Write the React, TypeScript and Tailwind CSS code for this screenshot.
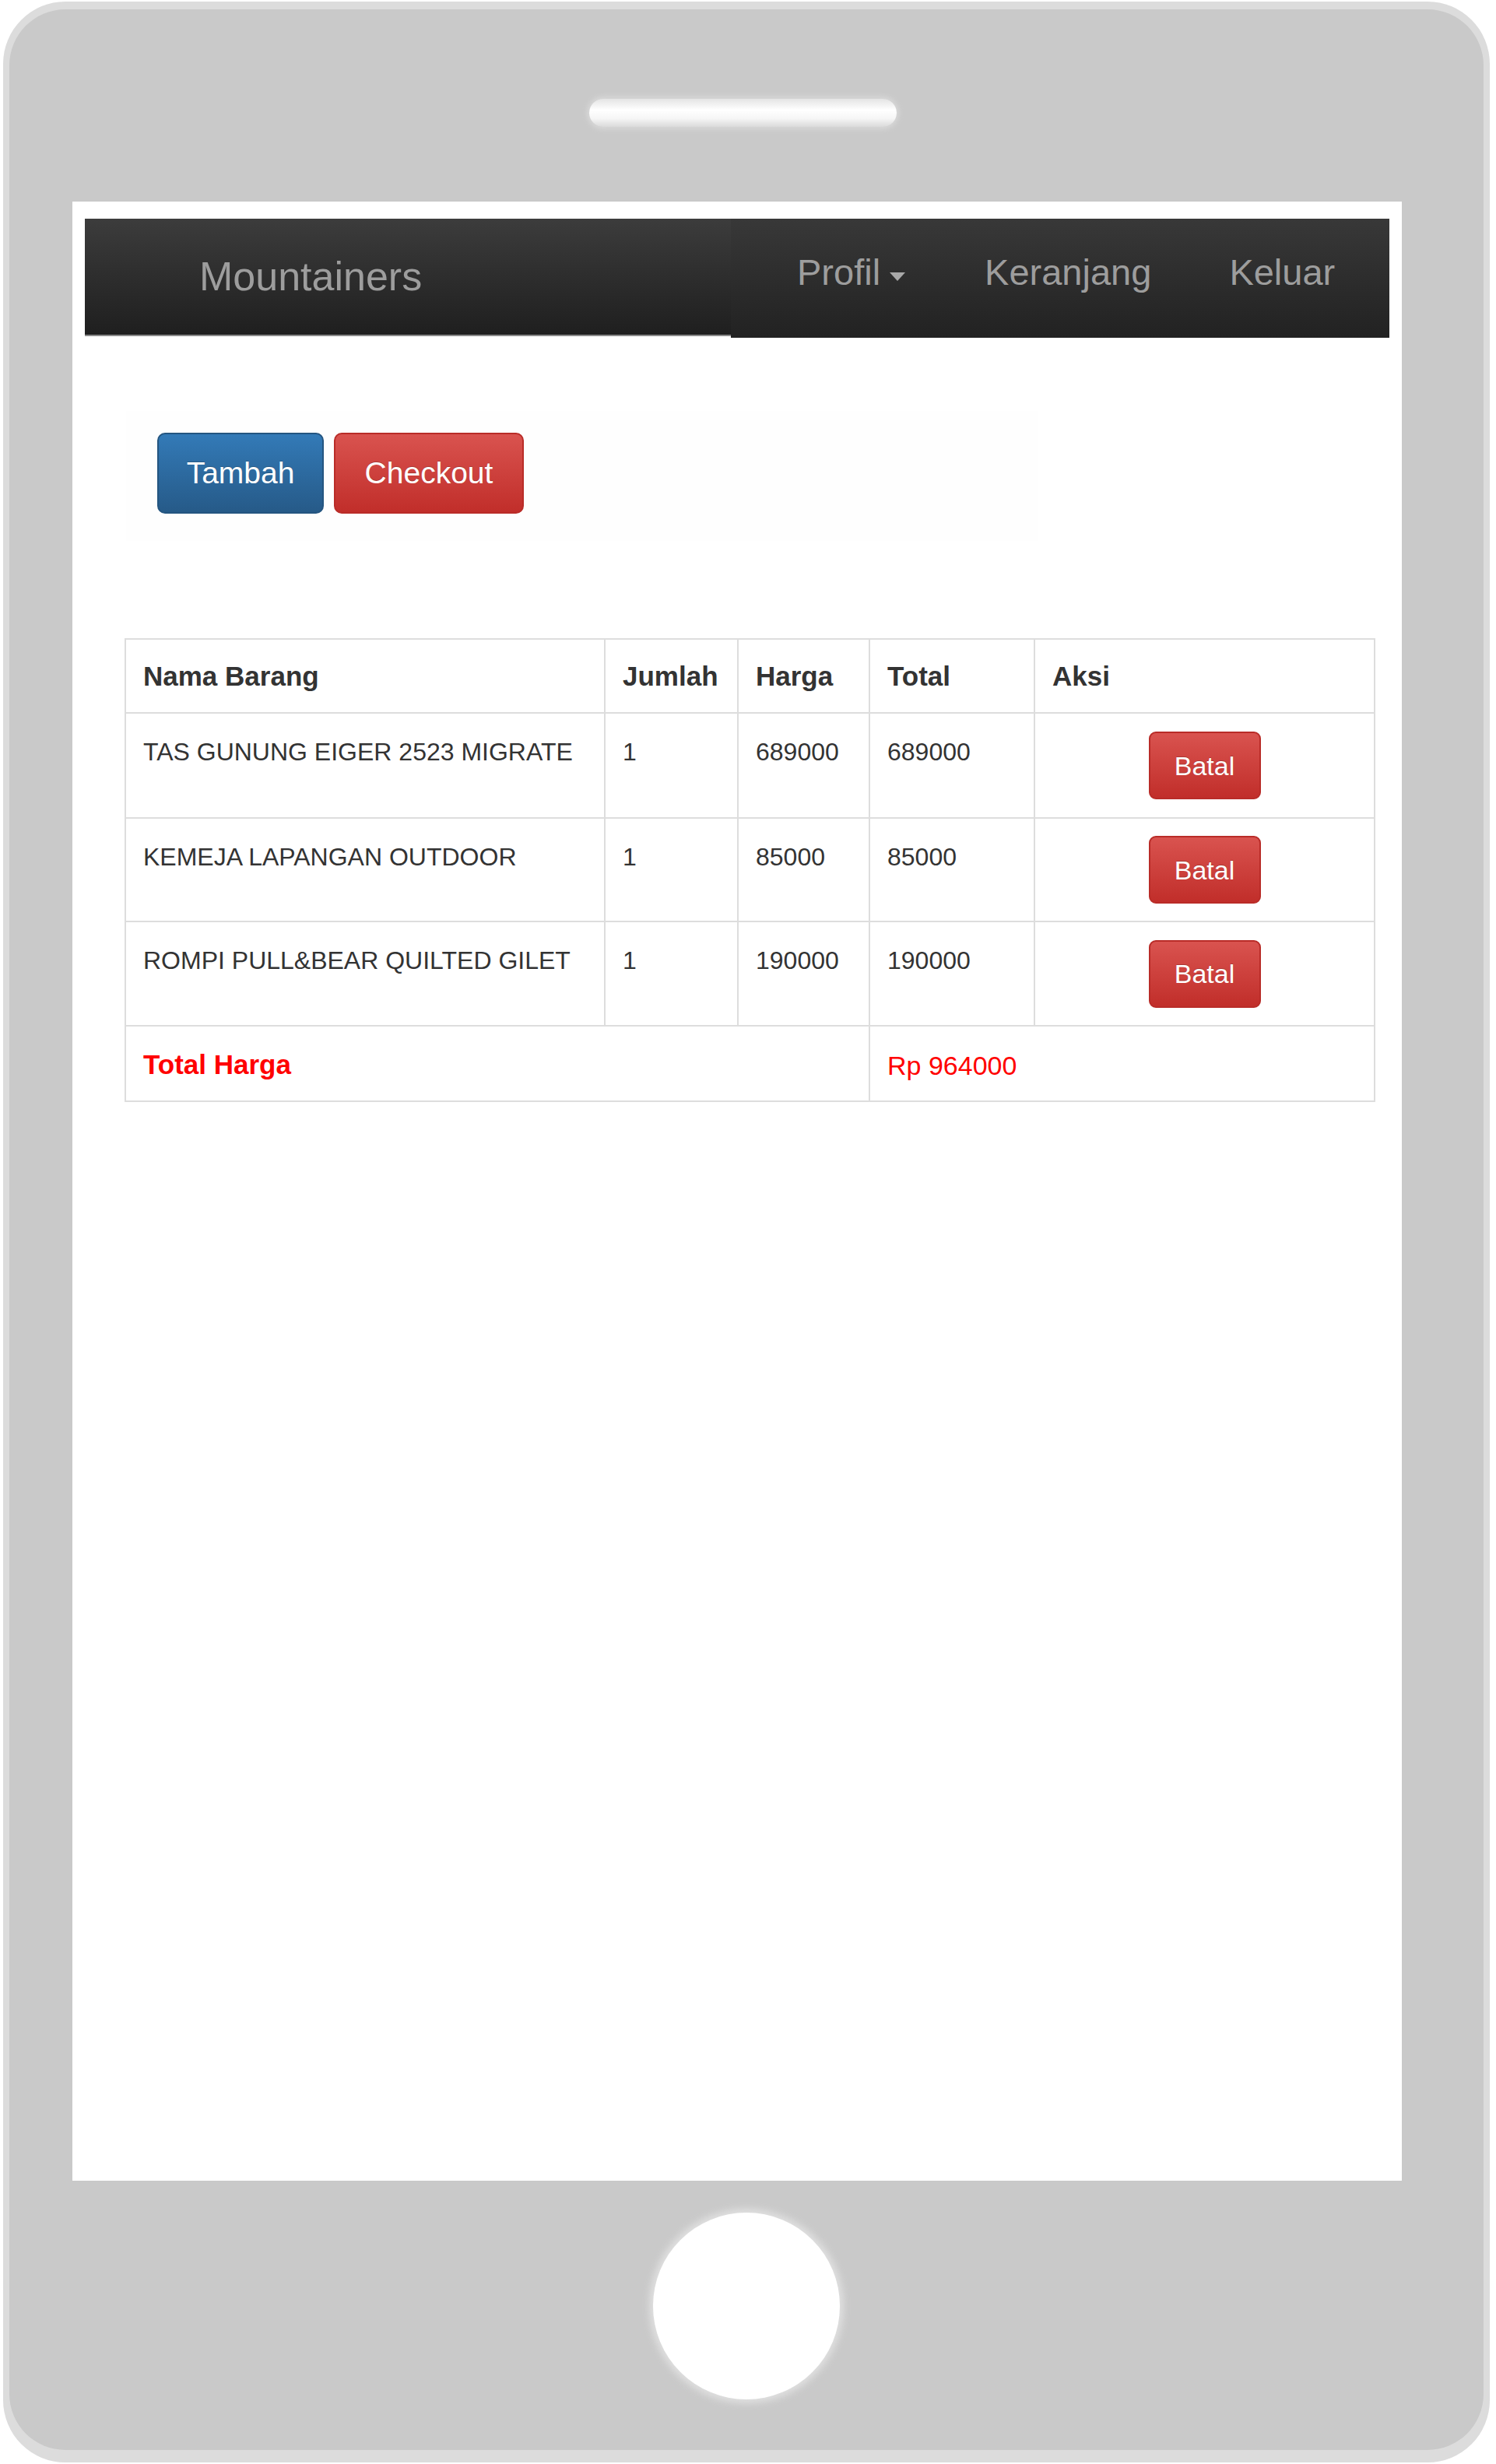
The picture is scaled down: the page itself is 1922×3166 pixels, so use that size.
import React from 'react'

const items = [
  { nama: 'TAS GUNUNG EIGER 2523 MIGRATE', jumlah: 1, harga: 689000, h: 'h-[135px]' },
  { nama: 'KEMEJA LAPANGAN OUTDOOR', jumlah: 1, harga: 85000, h: 'h-[133px]' },
  { nama: 'ROMPI PULL&BEAR QUILTED GILET', jumlah: 1, harga: 190000, h: 'h-[134px]' },
]

const redBtn =
  'bg-[linear-gradient(to_bottom,#d9534f,#c12e2a)] border-2 border-[#b92c28] text-white [text-shadow:0_-1px_0_rgba(0,0,0,0.2)]'

function Navbar() {
  return (
    <div className="flex items-start">
      <div className="w-[830px] h-[151px] bg-[linear-gradient(to_bottom,#3c3c3c,#1f1f1f)] border-b-2 border-[#8a8a8a] pl-[147px] pt-[48px]">
        <span className="text-[52px] leading-none text-[#9d9d9d]">Mountainers</span>
      </div>
      <div className="w-[846px] h-[153px] bg-[linear-gradient(to_bottom,#383838,#222222)] flex items-start pl-[85px] pt-[45px] text-[47px] leading-none text-[#9d9d9d]">
        <div className="flex items-center">
          <span>Profil</span>
          <span className="ml-[12px] mt-[12px] w-0 h-0 border-x-[10px] border-x-transparent border-t-[11px] border-t-[#a8a8a8]" />
        </div>
        <span className="ml-[102px]">Keranjang</span>
        <span className="ml-[100px]">Keluar</span>
      </div>
    </div>
  )
}

function CartTable() {
  const total = items.reduce((s, i) => s + i.harga * i.jumlah, 0)
  return (
    <table className="ml-[51px] mt-[125px] w-[1605px] table-fixed border-collapse text-[32px] leading-none text-[#333333]">
      <colgroup>
        <col className="w-[616px]" />
        <col className="w-[171px]" />
        <col className="w-[169px]" />
        <col className="w-[212px]" />
        <col className="w-[437px]" />
      </colgroup>
      <thead>
        <tr className="h-[95px]">
          {['Nama Barang', 'Jumlah', 'Harga', 'Total', 'Aksi'].map((t) => (
            <th
              key={t}
              className="border-2 border-[#dddddd] text-left align-top pl-[22px] pt-[29px] text-[35px] font-bold"
            >
              {t}
            </th>
          ))}
        </tr>
      </thead>
      <tbody>
        {items.map((it) => (
          <tr key={it.nama} className={it.h}>
            <td className="border-2 border-[#dddddd] align-top pl-[22px] pt-[33px] whitespace-nowrap">{it.nama}</td>
            <td className="border-2 border-[#dddddd] align-top pl-[22px] pt-[33px]">{it.jumlah}</td>
            <td className="border-2 border-[#dddddd] align-top pl-[22px] pt-[33px]">{it.harga}</td>
            <td className="border-2 border-[#dddddd] align-top pl-[22px] pt-[33px]">{it.harga * it.jumlah}</td>
            <td className="border-2 border-[#dddddd] align-middle text-center">
              <button className={`inline-flex items-center justify-center w-[144px] h-[87px] rounded-[9px] text-[34px] ${redBtn}`}>
                Batal
              </button>
            </td>
          </tr>
        ))}
        <tr className="h-[97px]">
          <td colSpan={3} className="border-2 border-[#dddddd] align-top pl-[22px] pt-[31px] text-[35px] font-bold text-[#ff0000]">
            Total Harga
          </td>
          <td colSpan={2} className="border-2 border-[#dddddd] align-top pl-[22px] pt-[33px] text-[34px] text-[#ff0000]">
            Rp {total}
          </td>
        </tr>
      </tbody>
    </table>
  )
}

export default function App() {
  return (
    <div className="w-[1922px] h-[3166px] bg-white overflow-hidden font-['Liberation_Sans',Arial,sans-serif]">
      <div className="ml-[4px] pt-[2px]">
        <div className="w-[1910px] h-[3162px] rounded-[80px] bg-[#dcdcdc] pt-[10px] pb-[16px] px-[8px]">
          <div className="h-full rounded-[72px] bg-[#c9c9c9] flex flex-col pt-[115px]">
            {/* speaker */}
            <div className="ml-[745px] w-[395px] h-[36px] rounded-full bg-[linear-gradient(to_bottom,#e4e4e4,#ffffff_40%,#f6f6f6_70%,#dadada)] shadow-[0_0_6px_3px_#d8d8d8]" />

            {/* screen */}
            <div className="mt-[96px] ml-[81px] w-[1708px] h-[2543px] bg-white px-[16px] pt-[22px]">
              <Navbar />

              <div className="ml-[53px] mt-[94px] w-[1171px] h-[167px] bg-[#fefefe] pl-[40px] pt-[28px] flex gap-[13px]">
                <button className="w-[214px] h-[104px] rounded-[10px] bg-[linear-gradient(to_bottom,#337ab7,#265a88)] border-2 border-[#245580] text-white text-[39px] [text-shadow:0_-1px_0_rgba(0,0,0,0.2)]">
                  Tambah
                </button>
                <button className={`w-[244px] h-[104px] rounded-[10px] text-[39px] ${redBtn}`}>Checkout</button>
              </div>

              <CartTable />
            </div>

            {/* home button */}
            <div className="mt-[41px] ml-[827px] w-[240px] h-[240px] rounded-full bg-white shadow-[0_0_10px_5px_#e0e0e0]" />
          </div>
        </div>
      </div>
    </div>
  )
}
